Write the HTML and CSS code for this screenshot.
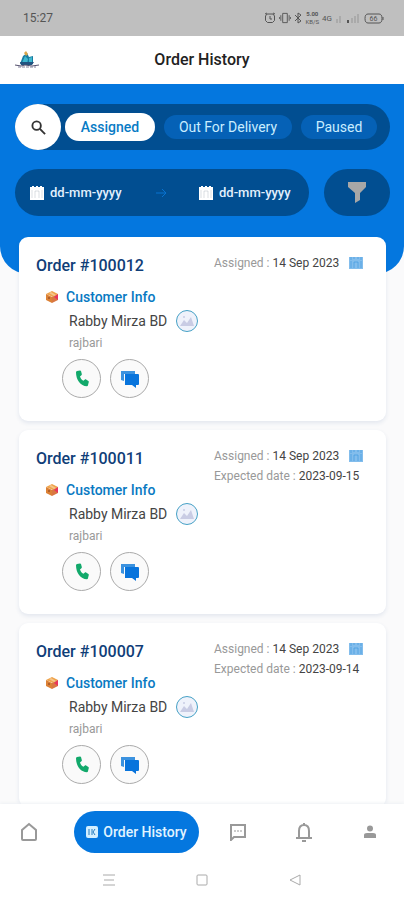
FILE: index.html
```html
<!DOCTYPE html>
<html lang="en">
<head>
<meta charset="utf-8">
<meta name="viewport" content="width=device-width, initial-scale=1">
<title>Order History</title>
<link rel="stylesheet" href="styles.css">
</head>
<body>
<svg class="defs" aria-hidden="true">
  <symbol id="calendar" viewBox="0 0 16 14"><path fill="currentColor" d="M1 1h2V0h2v1h2V0h2v1h2V0h2v1h2v13H1z"/><path d="M3 4v8M6 5h4v7M6 5v7M13 4v8" fill="none" stroke="#788995" stroke-width=".6" opacity=".45"/></symbol>
  <symbol id="calendar-blue" viewBox="0 0 16 14"><path fill="#83bdec" d="M1 1h14v12H1z"/><path d="M3 1v3M6 1v2M10 1v2M13 1v3M3 5v7M6 12V6h4v6M13 5v7" fill="none" stroke="#429be0" opacity=".7"/></symbol>
  <symbol id="box" viewBox="0 0 14 14"><path fill="#efa34b" d="M1 4l6-3 6 3-5 3z"/><path fill="#dc8135" d="M1 4l6 3v6l-6-3z"/><path fill="#d97742" d="M7 7l6-3v6l-6 3z"/><path fill="#f5c58b" d="M4 3l2-1 5 3-2 1z"/><path fill="#e9355c" d="M13 4v6l-4-3z"/><circle cx="4" cy="8" r="1" fill="#9f552a"/></symbol>
  <symbol id="photo" viewBox="0 0 16 16"><path fill="#c9cce4" d="M1 13l4-6 3 3 4-6 3 9z"/><circle cx="5" cy="4" r="1" fill="#c9cce4"/></symbol>
  <symbol id="phone" viewBox="0 0 16 18"><path fill="#12a96b" d="M3 1l3-.6c.6 0 .9.2 1 .7l.8 3c.1.5 0 .9-.4 1.200L6 6.600c.6 2 1.600 3.300 3.400 4.200l1.500-1.200c.4-.3.800-.3 1.200-.1l2.300 1.500c.4.3.5.7.4 1.100l-.9 3.300c-.1.5-.5.8-1 .8C6.500 16 2 10 2 2.200c0-.6.4-1.100 1-1.200z"/></symbol>
  <symbol id="chat" viewBox="0 0 20 18"><path fill="#3b92df" d="M1 1h14v3H4v7l-3-1z"/><path fill="#0874dc" d="M5 4h13q1 0 1 1v9q0 1-1 1h-2v3l-4-3H5z"/></symbol>
</svg>
<header class="status">
  <time>15:27</time>
  <div class="signals">
    <svg width="12" height="12" viewBox="0 0 12 12"><path d="M3 2h6l1.500 2v4.500l-2 2h-5l-2-2V4zM6 4v3h2M1 2l2-1M11 2L9 1"/></svg>
    <svg width="12" height="12" viewBox="0 0 13 12"><path d="M4 1h5v10H4zM2 3v6M11 3v6M.5 5v2M12.500 5v2"/></svg>
    <svg width="9" height="12" viewBox="0 0 9 12"><path d="M1 3l6 6-3 2V1l3 2-6 6"/></svg>
    <span class="rate"><b>5.00</b><span>KB/S</span></span>
    <span class="network">4G</span>
    <svg width="26" height="12" viewBox="0 0 26 12"><path class="dim" d="M2 11V7M5 11V4M17 11V6M20 11V4M23 11V2"/><path d="M13 11V8" stroke-width="2"/></svg>
    <svg width="20" height="11" viewBox="0 0 20 11"><path d="M4 1h11q3 0 3 4.500T15 10H4Q1 10 1 5.500T4 1zM19 4v3"/><text x="9.500" y="8">66</text></svg>
  </div>
</header>
<div class="topbar">
  <svg class="logo" viewBox="0 0 26 20"><path fill="#187ca1" d="M6 14l3-8 4-3 2 4 4-1v8z"/><path fill="#3eb8cf" d="M8 13l3-7 3 3-1 5zM15 8l3-1v5l-3 1z"/><path fill="#dba64a" d="M10 3l2-2 2 3-2 2z"/><path fill="#225380" d="M6 12h14l-2 3H7z"/><path stroke="#55516e" d="M1 15l6 1 4-1 7 1 7-1"/><path stroke="#82819a" stroke-dasharray="3 1" d="M4 17h18"/></svg>
  <h1>Order History</h1>
</div>
<main>
  <section class="filters">
    <div class="tabs">
      <button class="search" aria-label="Search"><svg width="15" height="15" viewBox="0 0 16 16"><circle cx="6" cy="6" r="4.500"/><path d="M9.500 9.500L15 15"/></svg></button>
      <button class="tab selected">Assigned</button>
      <button class="tab delivery">Out For Delivery</button>
      <button class="tab paused">Paused</button>
    </div>
    <div class="date-row">
      <div class="dates">
        <label><svg class="calendar"><use href="#calendar"/></svg><input type="text" placeholder="dd-mm-yyyy" aria-label="Start date"></label>
        <svg class="arrow" viewBox="0 0 12 12"><path d="M1 6h10M7 2l4 4-4 4"/></svg>
        <label><svg class="calendar"><use href="#calendar"/></svg><input type="text" placeholder="dd-mm-yyyy" aria-label="End date"></label>
      </div>
      <button class="filter" aria-label="Filter"><svg width="20" height="21" viewBox="0 0 20 21"><path d="M1 0h18v5l-6 6v7l-5 3V11L1 5z"/></svg></button>
    </div>
  </section>
  <section class="orders">
    <article class="card">
      <div class="card-head"><h2>Order #100012</h2><div class="order-dates"><p>Assigned : <strong>14 Sep 2023</strong><svg class="calendar"><use href="#calendar-blue"/></svg></p></div></div>
      <div class="customer"><h3><svg width="14" height="14"><use href="#box"/></svg>Customer Info</h3><p class="name">Rabby Mirza BD <span class="avatar"><svg width="16" height="16"><use href="#photo"/></svg></span></p><p class="place">rajbari</p></div>
      <div class="actions"><button aria-label="Call"><svg width="16" height="18"><use href="#phone"/></svg></button><button aria-label="Message"><svg width="20" height="18"><use href="#chat"/></svg></button></div>
    </article>
    <article class="card">
      <div class="card-head"><h2>Order #100011</h2><div class="order-dates"><p>Assigned : <strong>14 Sep 2023</strong><svg class="calendar"><use href="#calendar-blue"/></svg></p><p>Expected date : <strong>2023-09-15</strong></p></div></div>
      <div class="customer"><h3><svg width="14" height="14"><use href="#box"/></svg>Customer Info</h3><p class="name">Rabby Mirza BD <span class="avatar"><svg width="16" height="16"><use href="#photo"/></svg></span></p><p class="place">rajbari</p></div>
      <div class="actions"><button aria-label="Call"><svg width="16" height="18"><use href="#phone"/></svg></button><button aria-label="Message"><svg width="20" height="18"><use href="#chat"/></svg></button></div>
    </article>
    <article class="card">
      <div class="card-head"><h2>Order #100007</h2><div class="order-dates"><p>Assigned : <strong>14 Sep 2023</strong><svg class="calendar"><use href="#calendar-blue"/></svg></p><p>Expected date : <strong>2023-09-14</strong></p></div></div>
      <div class="customer"><h3><svg width="14" height="14"><use href="#box"/></svg>Customer Info</h3><p class="name">Rabby Mirza BD <span class="avatar"><svg width="16" height="16"><use href="#photo"/></svg></span></p><p class="place">rajbari</p></div>
      <div class="actions"><button aria-label="Call"><svg width="16" height="18"><use href="#phone"/></svg></button><button aria-label="Message"><svg width="20" height="18"><use href="#chat"/></svg></button></div>
    </article>
  </section>
</main>
<footer>
  <nav class="app-nav">
    <a href="#home" aria-label="Home"><svg width="18" height="20" viewBox="0 0 18 20"><path d="M2 8l7-6 7 6v9q0 1-1 1H3q-1 0-1-1z"/></svg></a>
    <a href="#orders" class="current"><svg width="12" height="12" viewBox="0 0 12 12"><rect width="12" height="12" rx="2" fill="#d3efff"/><path d="M3 3v6M6 3v6M9 3L7 6l2 3" fill="none" stroke="#267cc0"/></svg>Order History</a>
    <a href="#messages" aria-label="Messages"><svg width="18" height="18" viewBox="0 0 18 18"><path d="M2 2h14v12H5l-3 3z"/><path class="dots" d="M5 8h2M8 8h2M11 8h2"/></svg></a>
    <a href="#alerts" aria-label="Notifications"><svg width="18" height="20" viewBox="0 0 18 20"><path d="M1 16h16M4 16V9q0-6 5-6t5 6v7M9 3V1M7 19h4"/></svg></a>
    <a href="#profile" aria-label="Profile"><svg width="14" height="14" viewBox="0 0 14 14"><path class="solid" d="M1 13v-3q0-2 3-2h6q3 0 3 2v3z"/><circle class="solid" cx="7" cy="3.500" r="3"/></svg></a>
  </nav>
  <div class="system-nav">
    <button aria-label="Recent apps"><svg width="14" height="14" viewBox="0 0 14 14"><path d="M1 2h12M2 7h10M1 12h12"/></svg></button>
    <button aria-label="Device home"><svg width="14" height="14" viewBox="0 0 14 14"><rect x="2" y="2" width="10" height="10" rx="1"/></svg></button>
    <button aria-label="Back"><svg width="14" height="14" viewBox="0 0 14 14"><path d="M2 7l10-5v10z"/></svg></button>
  </div>
</footer>
</body>
</html>
```
FILE: styles.css
```css
* { box-sizing: border-box; }
body {
  margin: 0;
  height: 100vh;
  display: flex;
  flex-direction: column;
  overflow: hidden;
  background: #fafafb;
  color: #444;
  font-family: Roboto, "Liberation Sans", sans-serif;
}
h1, h2, h3, p { margin: 0; }
button, input { font: inherit; border: 0; padding: 0; }
button { display: flex; align-items: center; justify-content: center; }
svg { display: block; flex: none; }
.defs { position: absolute; width: 0; height: 0; }
.status {
  flex: none;
  height: 36px;
  padding: 0 20px 0 23px;
  display: flex;
  align-items: center;
  justify-content: space-between;
  background: #bfbfbf;
  color: #555;
  font-size: 12px;
}
.signals { display: flex; align-items: center; gap: 3px; }
.signals path { fill: none; stroke: #555; }
.signals .dim { stroke: #aaa; stroke-width: 2; }
.signals text { font-size: 7px; text-anchor: middle; fill: #555; }
.rate { display: grid; font-size: 6px; line-height: 8px; text-align: center; }
.network { font-size: 8px; }
.topbar {
  flex: none;
  height: 48px;
  padding: 0 14px;
  display: grid;
  grid-template-columns: 26px 1fr 26px;
  align-items: center;
  background: #fff;
}
.logo { width: 26px; height: 20px; fill: none; }
h1 { text-align: center; color: #222; font-size: 16px; line-height: 20px; font-weight: 500; }
main { flex: 1; min-height: 0; overflow: hidden; }
.filters {
  padding: 20px 14px 58px 15px;
  background: #0477df;
  border-radius: 0 0 28px 28px;
}
.tabs { height: 46px; display: flex; align-items: center; background: #014e91; border-radius: 23px; }
.search { width: 46px; height: 46px; border-radius: 50%; background: #fff; margin-right: 4px; }
.search svg { fill: none; stroke: #333; stroke-width: 2; }
.tab { height: 24px; border-radius: 14px; background: #0561b6; color: #c9edff; font-size: 14px; }
.tab.selected { width: 90px; height: 28px; background: #fff; color: #087bc5; font-weight: 500; }
.delivery { width: 128px; margin: 0 9px; }
.paused { width: 76px; }
.date-row { margin-top: 19px; display: flex; gap: 15px; }
.dates {
  flex: 1;
  min-width: 0;
  height: 47px;
  padding: 0 17px 0 14px;
  display: flex;
  align-items: center;
  justify-content: space-between;
  background: #014e91;
  border-radius: 24px;
}
.dates label { display: flex; align-items: center; gap: 5px; color: #fff; }
.dates input { width: 73px; background: none; color: #fff; font-size: 13px; font-weight: 500; }
.dates input::placeholder { color: #e1f0fd; opacity: 1; }
.calendar { width: 16px; height: 14px; }
.arrow { width: 12px; height: 12px; fill: none; stroke: #0872d0; }
.filter { width: 66px; height: 47px; border-radius: 24px; background: #014e91; }
.filter svg { fill: #a7a7a7; }
.orders { position: relative; margin-top: -37px; padding: 0 18px 0 19px; display: grid; gap: 9px; }
.card {
  height: 184px;
  padding: 16px 22px 0 17px;
  background: #fff;
  border-radius: 9px;
  box-shadow: 0 2px 4px rgb(60 90 150 / 12%);
}
.card-head { height: 32px; display: flex; justify-content: space-between; }
h2 { color: #103e78; font-size: 16px; line-height: 26px; font-weight: 500; }
.order-dates { width: 150px; color: #999; font-size: 12px; line-height: 20px; white-space: nowrap; }
.order-dates p { display: flex; gap: 3px; }
.order-dates strong { color: #444; font-weight: 400; }
.order-dates .calendar { margin: 3px 0 0 auto; }
.customer { padding-left: 9px; }
h3 { display: flex; align-items: center; gap: 7px; color: #0879c2; font-size: 14px; line-height: 24px; font-weight: 500; }
.name { height: 24px; padding-left: 24px; display: flex; align-items: center; gap: 9px; font-size: 14px; }
.avatar { width: 22px; height: 22px; display: grid; place-items: center; border: 1px solid #46a1c6; border-radius: 50%; background: #eff2fb; }
.place { padding-left: 24px; color: #999; font-size: 12px; line-height: 20px; }
.actions { margin: 6px 0 0 26px; display: flex; gap: 9px; }
.actions button { width: 39px; height: 39px; border: 1px solid #aaa; border-radius: 50%; background: #fafafa; }
footer { flex: none; background: #fff; position: relative; box-shadow: 0 -1px 3px #eef1f4; }
.app-nav {
  height: 56px;
  padding-right: 12px;
  display: grid;
  grid-template-columns: 58fr 157fr 45fr 88fr 44fr;
  align-items: center;
  justify-items: center;
}
.app-nav a { color: #999; text-decoration: none; }
.app-nav svg { fill: none; stroke: currentColor; stroke-width: 2; }
.app-nav .dots { stroke-width: 1; }
.app-nav .solid { fill: #999; stroke: none; }
.app-nav .current { width: 125px; height: 42px; display: flex; align-items: center; justify-content: center; gap: 5px; border-radius: 21px; background: #0477df; color: #e1f4ff; font-size: 14px; font-weight: 500; }
.app-nav .current svg { stroke: none; stroke-width: 1; }
.system-nav { height: 40px; padding: 0 102px; display: flex; align-items: center; justify-content: space-between; }
.system-nav button { background: none; }
.system-nav svg { fill: none; stroke: #aaa; }
```
